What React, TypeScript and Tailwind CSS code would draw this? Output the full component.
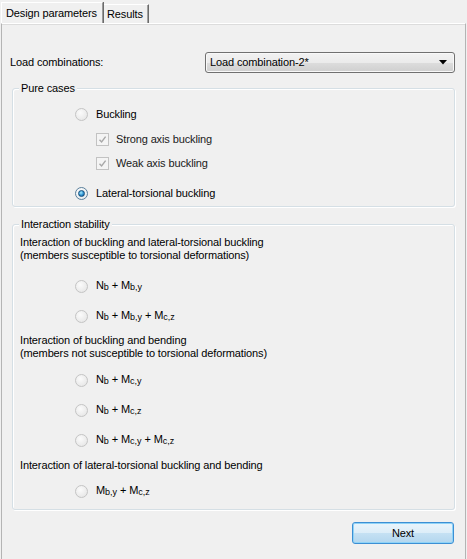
import React from 'react';

const Radio: React.FC<{ checked?: boolean }> = ({ checked }) => (
  <span
    className={
      checked
        ? 'flex h-[13px] w-[13px] shrink-0 items-center justify-center rounded-full border border-[#5a7f9b] bg-[radial-gradient(circle_at_40%_35%,#ffffff,#dfe6ea)]'
        : 'flex h-[13px] w-[13px] shrink-0 items-center justify-center rounded-full border border-[#c4c4c4] bg-[radial-gradient(circle_at_40%_35%,#fbfbfb,#e2e2e2)]'
    }
  >
    {checked && (
      <span className="h-[7px] w-[7px] rounded-full border border-[#164f7a] bg-[radial-gradient(circle_at_40%_35%,#a6ecff,#2a8fd0_55%,#0e4f86)]" />
    )}
  </span>
);

const Check: React.FC = () => (
  <span className="flex h-[13px] w-[13px] shrink-0 items-center justify-center border border-[#c2c2c2] bg-[#f4f4f4]">
    <svg width="9" height="9" viewBox="0 0 9 9">
      <path d="M1.5 4.8 L3.6 7 L7.6 1.6" fill="none" stroke="#a8a8a8" strokeWidth="1.4" />
    </svg>
  </span>
);

// N_b + M_x style labels
const Sub: React.FC<{ children: React.ReactNode }> = ({ children }) => (
  <span className="relative top-[1px] text-[9px] tracking-normal">{children}</span>
);

const RadioRow: React.FC<{ checked?: boolean; className?: string; children: React.ReactNode }> = ({
  checked,
  className,
  children,
}) => (
  <div className={'flex h-[16px] items-center gap-[8px] pl-[55px] ' + (className ?? '')}>
    <Radio checked={checked} />
    <span>{children}</span>
  </div>
);

const CheckRow: React.FC<{ className?: string; children: React.ReactNode }> = ({ className, children }) => (
  <div className={'flex h-[16px] items-center gap-[7px] pl-[76px] text-[#1a1a1a] ' + (className ?? '')}>
    <Check />
    <span>{children}</span>
  </div>
);

const GroupBox: React.FC<{ title: string; className?: string; children: React.ReactNode }> = ({
  title,
  className,
  children,
}) => (
  <div
    className={
      'relative ml-[10px] mr-[10px] rounded-[3px] border border-[#d5dfe5] pl-[7px] shadow-[1px_1px_0_#ffffff,inset_1px_1px_0_#ffffff] ' +
      (className ?? '')
    }
  >
    <span className="absolute left-[6px] top-[-8px] bg-[#f0f0f0] px-[2px] leading-[14px]">{title}</span>
    {children}
  </div>
);

export default function App() {
  return (
    <div
      className="h-[559px] w-[467px] overflow-hidden bg-[#f0f0f0] text-[11px] leading-[13px] tracking-[-0.12px] text-black"
      style={{ fontFamily: '"Liberation Sans", Arial, sans-serif' }}
    >
      {/* tabs */}
      <div className="flex h-[23px] items-end pl-[1px]">
        <div className="flex h-[21px] w-[102px] items-center border-l border-r border-t border-l-white border-r-[#9a9a9a] border-t-white pl-[4px] shadow-[1px_0_0_#6b6b6b]">
          Design parameters
        </div>
        <div className="ml-[1px] flex h-[19px] w-[45px] items-center border-r border-t border-r-[#6b6b6b] border-t-white pl-[3px] shadow-[inset_-1px_0_0_#a0a0a0]">
          Results
        </div>
      </div>

      {/* tab page */}
      <div className="ml-[1px] h-[536px] w-[465px] border-l border-r border-t border-l-[#b4b4b4] border-r-[#b4b4b4] border-t-white shadow-[inset_0_1px_0_#dcdcdc]">
        <div className="mt-[28px] flex h-[21px] items-center pl-[8px] pr-[10px]">
          <span className="flex-1">Load combinations:</span>
          <div className="relative flex h-[21px] w-[250px] items-center rounded-[3px] border border-[#707070] bg-[linear-gradient(#f2f2f2,#ebebeb_50%,#dddddd_50%,#cfcfcf)] pl-[4px] shadow-[inset_0_0_0_1px_#f8f8f8]">
            <span>Load combination-2*</span>
            <svg className="absolute right-[7px] top-[7px]" width="8" height="5" viewBox="0 0 8 5">
              <path d="M0 0 H8 L4 4.5 Z" fill="#000" />
            </svg>
          </div>
        </div>

        <GroupBox title="Pure cases" className="mt-[15px] h-[119px]">
          <RadioRow className="mt-[17px]">Buckling</RadioRow>
          <CheckRow className="mt-[9px]">Strong axis buckling</CheckRow>
          <CheckRow className="mt-[8px]">Weak axis buckling</CheckRow>
          <RadioRow checked className="mt-[14px]">
            Lateral-torsional buckling
          </RadioRow>
        </GroupBox>

        <GroupBox title="Interaction stability" className="mt-[17px] h-[286px]">
          <div className="mt-[11px]">
            Interaction of buckling and lateral-torsional buckling
            <br />
            (members susceptible to torsional deformations)
          </div>
          <RadioRow className="mt-[16px]">
            N<Sub>b</Sub> + M<Sub>b,y</Sub>
          </RadioRow>
          <RadioRow className="mt-[14px]">
            N<Sub>b</Sub> + M<Sub>b,y</Sub> + M<Sub>c,z</Sub>
          </RadioRow>
          <div className="mt-[10px]">
            Interaction of buckling and bending
            <br />
            (members not susceptible to torsional deformations)
          </div>
          <RadioRow className="mt-[12px]">
            N<Sub>b</Sub> + M<Sub>c,y</Sub>
          </RadioRow>
          <RadioRow className="mt-[14px]">
            N<Sub>b</Sub> + M<Sub>c,z</Sub>
          </RadioRow>
          <RadioRow className="mt-[14px]">
            N<Sub>b</Sub> + M<Sub>c,y</Sub> + M<Sub>c,z</Sub>
          </RadioRow>
          <div className="mt-[11px]">Interaction of lateral-torsional buckling and bending</div>
          <RadioRow className="mt-[11px]">
            M<Sub>b,y</Sub> + M<Sub>c,z</Sub>
          </RadioRow>
        </GroupBox>

        <div className="mt-[12px] flex justify-end pr-[11px]">
          <button className="h-[22px] w-[102px] rounded-[3px] border border-[#3c8fd4] bg-[linear-gradient(#eaf5fc,#dcedf8_50%,#c5e1f3_50%,#b3d6ee)] shadow-[inset_0_0_0_1px_#8fd3f7]">
            Next
          </button>
        </div>
      </div>
    </div>
  );
}
